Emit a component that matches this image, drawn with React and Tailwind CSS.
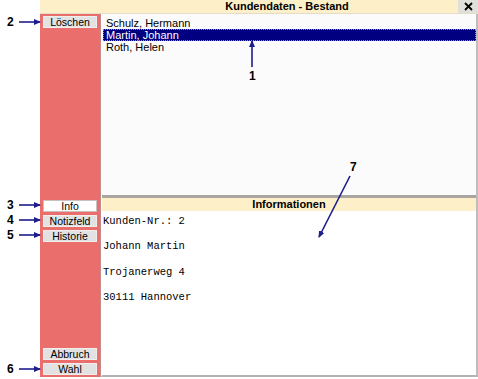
const navy = '#1d1d8c';

function SideButton({ label, active }) {
  return (
    <div
      className={
        'h-[12px] w-[54px] flex items-center justify-center leading-none text-[10.5px] border ' +
        (active ? 'bg-white border-[#c9c0c0]' : 'bg-[#e2e2e2] border-[#f2eded]')
      }
    >
      {label}
    </div>
  );
}

function Callout({ n, y }) {
  return (
    <span className="absolute left-[7px] font-bold text-[12px] leading-[14px]" style={{ top: y - 7 }}>
      {n}
    </span>
  );
}

export default function App() {
  const customers = ['Schulz, Hermann', 'Martin, Johann', 'Roth, Helen'];

  return (
    <div className="relative w-[478px] h-[379px] bg-white flex overflow-hidden text-black font-['Liberation_Sans',Arial,sans-serif] text-[11px]">
      <div className="w-[40px] shrink-0" />

      <div className="flex-1 flex flex-col">
        {/* title bar */}
        <div className="h-[14px] flex bg-[#fdf0c8] border-b border-[#e4dccb]">
          <div className="flex-1 pl-[76px] text-center font-bold leading-[13px]">Kundendaten - Bestand</div>
          <div className="w-[20px] bg-[#e0e0da] flex items-center justify-center">
            <svg width="9" height="9" viewBox="0 0 9 9">
              <path d="M1 1 L8 8 M8 1 L1 8" stroke="#000" strokeWidth="1.8" />
            </svg>
          </div>
        </div>

        <div className="flex-1 flex pb-[2px]">
          {/* left button bar */}
          <div className="w-[61px] shrink-0 bg-[#ea6e6c] border-r border-[#c58b8b] flex flex-col items-center pt-[2px] pb-[2px]">
            <SideButton label="Löschen" />
            <div className="mt-[172px] flex flex-col gap-[3px]">
              <SideButton label="Info" active />
              <SideButton label="Notizfeld" />
              <SideButton label="Historie" />
            </div>
            <div className="mt-auto flex flex-col gap-[3px]">
              <SideButton label="Abbruch" />
              <SideButton label="Wahl" />
            </div>
          </div>

          {/* content */}
          <div className="flex-1 flex flex-col border-l border-white border-r-2 border-b-2 border-r-[#bdbdbd] border-b-[#b3b3b3]">
            <div className="h-[181px] bg-[#fbfbfb] pt-[3px] pl-[1px]">
              {customers.map((c, i) => (
                <div
                  key={c}
                  className={
                    'h-[12px] pl-[3px] leading-[12px] ' +
                    (i === 1 ? 'bg-[#000080] text-white outline outline-1 outline-dotted outline-[#8a8ab8] -outline-offset-1' : '')
                  }
                >
                  {c}
                </div>
              ))}
            </div>
            <div className="h-[3px] bg-[#aaa69f]" />
            <div className="h-[13px] bg-[#fdf0c8] text-center font-bold leading-[13px]">Informationen</div>
            <div className="flex-1 bg-white pt-[4px] pl-[1px] whitespace-pre font-['Liberation_Mono','Courier_New',monospace] text-[10.5px] leading-[12.7px]">
              {'Kunden-Nr.: 2\n\nJohann Martin\n\nTrojanerweg 4\n\n30111 Hannover'}
            </div>
          </div>
        </div>
      </div>

      {/* annotations */}
      <svg className="absolute left-0 top-0 pointer-events-none" width="478" height="379">
        <defs>
          <marker id="ah" markerUnits="userSpaceOnUse" markerWidth="7" markerHeight="6" refX="6" refY="3" orient="auto">
            <path d="M0 0 L7 3 L0 6 Z" fill={navy} />
          </marker>
        </defs>
        {[22, 205, 220, 235, 369].map((y) => (
          <line key={y} x1="19" y1={y} x2="40" y2={y} stroke={navy} strokeWidth="1.6" markerEnd="url(#ah)" />
        ))}
        <line x1="252" y1="67" x2="252" y2="41" stroke={navy} strokeWidth="1.6" markerEnd="url(#ah)" />
        <line x1="350" y1="176" x2="319" y2="237" stroke={navy} strokeWidth="1.6" markerEnd="url(#ah)" />
      </svg>
      <Callout n="2" y={22} />
      <Callout n="3" y={205} />
      <Callout n="4" y={220} />
      <Callout n="5" y={235} />
      <Callout n="6" y={369} />
      <span className="absolute left-[249px] top-[69px] font-bold text-[12px] leading-[14px]">1</span>
      <span className="absolute left-[350px] top-[160px] font-bold text-[12px] leading-[14px]">7</span>
    </div>
  );
}
